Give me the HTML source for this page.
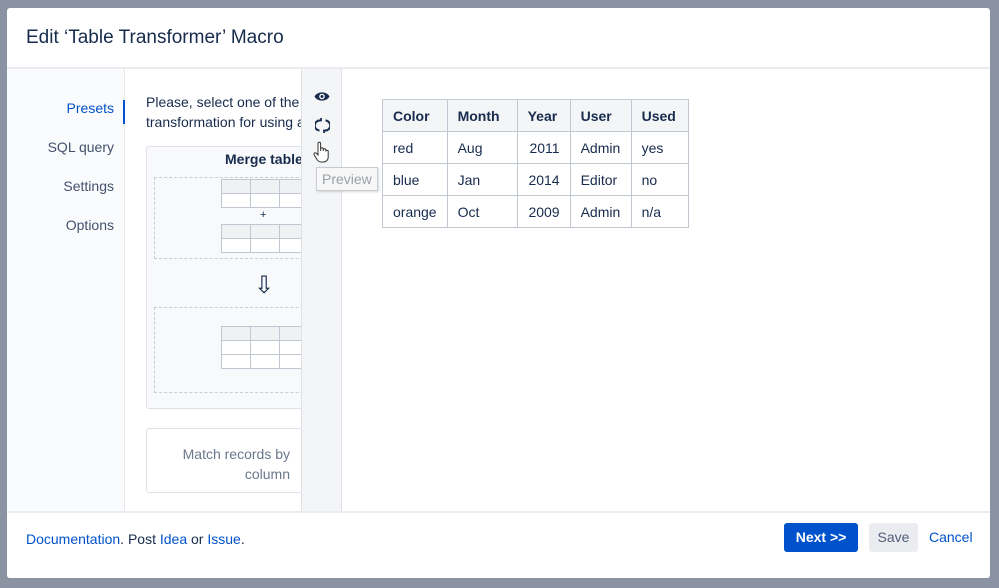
<!DOCTYPE html>
<html><head><meta charset="utf-8"><style>
*{box-sizing:border-box;margin:0;padding:0}
body{width:999px;height:588px;background:#8b93a3;position:relative;overflow:hidden;font-family:"Liberation Sans",sans-serif;color:#172b4d}
.dlg{position:absolute;left:7px;top:8px;width:983px;height:570px;background:#fff;border-radius:3px;overflow:hidden}
.abs{position:absolute}
h1{position:absolute;left:19px;top:19px;font-size:19px;font-weight:normal;color:#172b4d}
.nav{left:0;top:59px;width:118px;height:444px;background:#fafbfc;border-top:2px solid #ebecf0}
.nav div{position:absolute;right:11px;font-size:14px;color:#42526e}
.cont{left:117px;top:59px;width:178px;height:444px;background:#fff;border-top:2px solid #ebecf0;border-left:1px solid #e6e8ec;overflow:hidden}
.tb{left:294px;top:59px;width:41px;height:444px;background:#f4f5f7;border-left:1px solid #dfe1e6;border-right:1px solid #dfe1e6;border-top:2px solid #ebecf0}
.right{left:335px;top:59px;width:648px;height:444px;border-top:2px solid #ebecf0}
.foot{left:0;top:503px;width:983px;height:67px;border-top:2px solid #ebecf0;background:#fff}
table{border-collapse:collapse;font-size:14px;color:#172b4d}
td,th{border:1px solid #c1c7d0;height:32px;padding:0 10px;text-align:left}
th{background:#f4f5f7;font-weight:bold}
.mt td{border:1px solid #c1c7d0;height:14px;width:29px;padding:0;background:#fff}
.mt tr:first-child td{background:#f0f1f3}
</style></head><body>
<div class="dlg">
<h1>Edit ‘Table Transformer’ Macro</h1>
<div class="abs nav">
<div style="top:31px;color:#0052cc">Presets</div>
<div style="top:70px">SQL query</div>
<div style="top:109px">Settings</div>
<div style="top:148px">Options</div>
</div>
<div class="abs" style="left:116px;top:92px;width:2px;height:24px;background:#0052cc;z-index:3"></div>
<div class="abs cont">
<div class="abs" style="left:21px;top:23px;font-size:14px;line-height:20px;white-space:nowrap;color:#172b4d">Please, select one of the predefined<br>transformation for using as a template</div>
<div class="abs" style="left:21px;top:77px;width:200px;height:263px;border:1px solid #dfe1e6;border-radius:3px;background:#f8f9fb">
<div class="abs" style="left:78px;top:4px;font-size:14px;font-weight:bold;white-space:nowrap">Merge tables</div>
<div class="abs" style="left:7px;top:30px;width:200px;height:82px;border:1px dashed #c8ccd3"></div>
<table class="mt abs" style="left:74px;top:32px"><tr><td></td><td></td><td></td></tr><tr><td></td><td></td><td></td></tr></table>
<div class="abs" style="left:113px;top:62px;font-size:11px">+</div>
<table class="mt abs" style="left:74px;top:77px"><tr><td></td><td></td><td></td></tr><tr><td></td><td></td><td></td></tr></table>
<div class="abs" style="left:107px;top:124px;font-size:24px">⇩</div>
<div class="abs" style="left:7px;top:160px;width:200px;height:86px;border:1px dashed #c8ccd3"></div>
<table class="mt abs" style="left:74px;top:179px"><tr><td></td><td></td><td></td></tr><tr><td></td><td></td><td></td></tr><tr><td></td><td></td><td></td></tr></table>
</div>
<div class="abs" style="left:21px;top:359px;width:200px;height:65px;border:1px solid #dfe1e6;border-radius:3px;background:#fff">
<div class="abs" style="left:10px;top:15px;width:133px;text-align:right;font-size:14px;line-height:20px;color:#6b778c">Match records by column</div>
</div>
</div>
<div class="abs tb">
<svg class="abs" style="left:12px;top:22px" width="16" height="11" viewBox="0 0 16 11"><path d="M0.5 5.5C3.5 0 12.5 0 15.5 5.5C12.5 11 3.5 11 0.5 5.5Z" fill="#172b4d"/><circle cx="8" cy="5.5" r="2.8" fill="#fff"/><circle cx="8" cy="5.5" r="1.5" fill="#172b4d"/></svg>
<svg class="abs" style="left:13px;top:49px" width="15" height="15" viewBox="0 0 15 15" fill="none" stroke="#172b4d" stroke-width="2"><path d="M5 2.5A5 5 0 0 0 4.5 12.5"/><path d="M10 12.5A5 5 0 0 0 10.5 2.5"/><path d="M2.5 2.5h3.5v-2.5" stroke-width="1.8"/><path d="M12.5 12.5h-3.5v2.5" stroke-width="1.8"/></svg>
<svg class="abs" style="left:11px;top:72px" width="16" height="22" viewBox="0 0 16 22" fill="#fff" stroke="#333" stroke-width="1"><path d="M5 2.5a1.3 1.3 0 0 1 2.6 0V10V8a1.3 1.3 0 0 1 2.6 0v2V9a1.3 1.3 0 0 1 2.6 0v1.5a1.2 1.2 0 0 1 2.4 0V16c0 3-2 5-5 5H8c-2 0-3-1-4-2.5L1 13.5a1.3 1.3 0 0 1 2-1.5L5 14Z"/></svg>
<div class="abs" style="left:14px;top:98px;width:62px;height:24px;border:1px solid #c8ccd3;background:#f7f7f7;font-size:14px;color:#9aa0a8;padding:3px 5px;z-index:4;box-shadow:1px 1px 2px rgba(0,0,0,.15)">Preview</div>
</div>
<div class="abs right">
<table class="abs" style="left:40px;top:30px">
<tr><th style="width:63px">Color</th><th style="width:70px">Month</th><th style="width:53px">Year</th><th style="width:61px">User</th><th style="width:57px">Used</th></tr>
<tr><td>red</td><td>Aug</td><td style="text-align:right">2011</td><td>Admin</td><td>yes</td></tr>
<tr><td>blue</td><td>Jan</td><td style="text-align:right">2014</td><td>Editor</td><td>no</td></tr>
<tr><td>orange</td><td>Oct</td><td style="text-align:right">2009</td><td>Admin</td><td>n/a</td></tr>
</table>
</div>
<div class="abs foot">
<div class="abs" style="left:19px;top:18px;font-size:14px;color:#172b4d"><span style="color:#0052cc">Documentation</span>. Post <span style="color:#0052cc">Idea</span> or <span style="color:#0052cc">Issue</span>.</div>
<div class="abs" style="left:777px;top:10px;width:74px;height:29px;background:#0052cc;border-radius:3px;color:#fff;font-weight:bold;font-size:14px;text-align:center;line-height:29px">Next &gt;&gt;</div>
<div class="abs" style="left:862px;top:10px;width:49px;height:29px;background:#ebecf0;border-radius:3px;color:#505f79;font-size:14px;text-align:center;line-height:29px">Save</div>
<div class="abs" style="left:922px;top:10px;font-size:14px;line-height:29px;color:#0052cc">Cancel</div>
</div>
</div>
</body></html>
